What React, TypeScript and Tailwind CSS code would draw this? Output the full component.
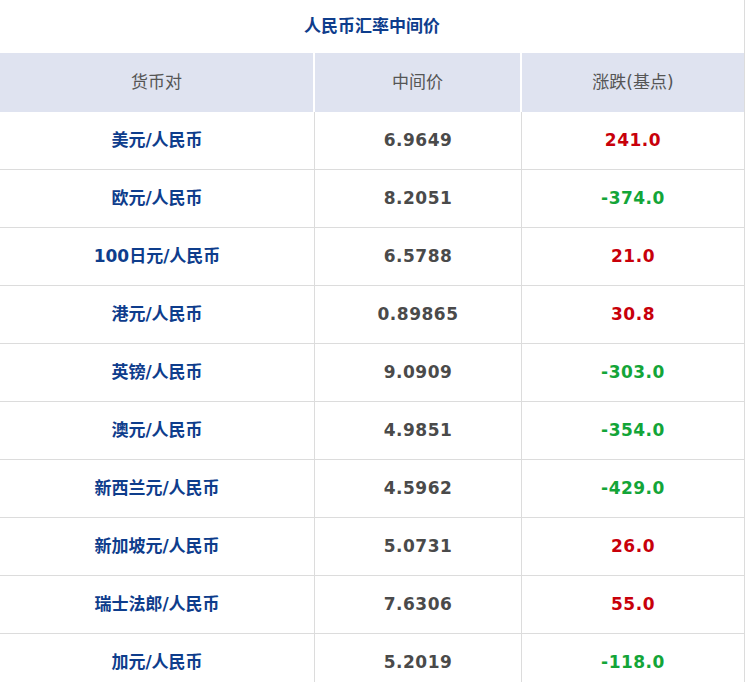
const rows = [
  ['美元/人民币', '6.9649', '241.0'],
  ['欧元/人民币', '8.2051', '-374.0'],
  ['100日元/人民币', '6.5788', '21.0'],
  ['港元/人民币', '0.89865', '30.8'],
  ['英镑/人民币', '9.0909', '-303.0'],
  ['澳元/人民币', '4.9851', '-354.0'],
  ['新西兰元/人民币', '4.5962', '-429.0'],
  ['新加坡元/人民币', '5.0731', '26.0'],
  ['瑞士法郎/人民币', '7.6306', '55.0'],
  ['加元/人民币', '5.2019', '-118.0'],
];

const font = { fontFamily: '"DejaVu Sans", "Noto Sans CJK SC", sans-serif' };

export default function App() {
  return (
    <div className="w-[746px] h-[682px] overflow-hidden bg-white" style={font}>
      <div className="w-[745px] border-r border-[#dcdcdc]">
        <div className="h-[53px] flex items-center justify-center text-[17px] font-bold text-[#0e3d8c]">
          人民币汇率中间价
        </div>
        <div className="grid grid-cols-[315px_207px_1fr] h-[59px] bg-[#dfe3f0] text-[17px] text-[#555]">
          <div className="flex items-center justify-center border-r-2 border-white">货币对</div>
          <div className="flex items-center justify-center border-r-2 border-white">中间价</div>
          <div className="flex items-center justify-center">涨跌(基点)</div>
        </div>
        {rows.map(([pair, mid, chg]) => (
          <div key={pair} className="grid grid-cols-[315px_207px_1fr] h-[58px] border-b border-[#dcdcdc] text-[17px] font-bold">
            <div className="flex items-center justify-center border-r border-[#dcdcdc] text-[#0e3d8c]">{pair}</div>
            <div className="flex items-center justify-center border-r border-[#dcdcdc] text-[#4a4a4a] tracking-[0.5px]">{mid}</div>
            <div className={`flex items-center justify-center tracking-[0.5px] ${chg.startsWith('-') ? 'text-[#13a538]' : 'text-[#c8000a]'}`}>{chg}</div>
          </div>
        ))}
      </div>
    </div>
  );
}
